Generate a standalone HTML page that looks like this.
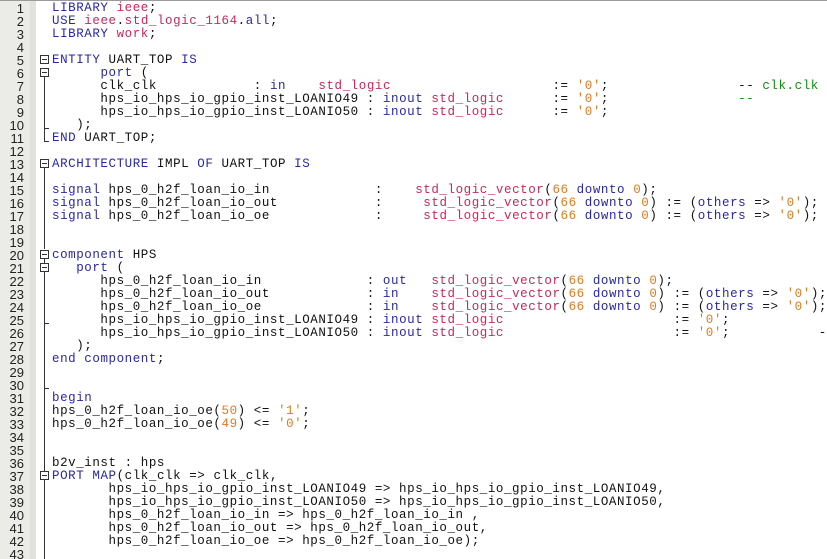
<!DOCTYPE html>
<html><head><meta charset="utf-8"><style>
html,body{margin:0;padding:0;background:#fff;width:827px;height:559px;overflow:hidden;position:relative}
.top{position:absolute;left:0;top:0;width:827px;height:1px;background:#9a9a9a}
.gut{position:absolute;left:0;top:1px;width:36px;height:558px;background:#ebebe8}
.gut2{position:absolute;left:30px;top:1px;width:6px;height:558px;background:#e2e2dc}
.nums{position:absolute;left:0;top:2px;width:24px;text-align:right;font-family:"Liberation Sans",sans-serif;font-size:13px;line-height:13px;color:#222;white-space:pre}
.code{position:absolute;left:52px;top:2px;font-family:"Liberation Mono",monospace;font-size:12.5px;letter-spacing:0.57px;line-height:13px;color:#111;white-space:pre}
.k{color:#2828a8}.t{color:#c8285a}.n{color:#e07a20}.c{color:#109010}
.box{position:absolute;left:40px;width:7px;height:7px;border:1px solid #333;background:#fff}
.box:after{content:"";position:absolute;left:1px;top:3px;width:5px;height:1px;background:#333}
.vl{position:absolute;left:44px;width:1px;background:#333}
.tk{position:absolute;left:44px;width:5px;height:1px;background:#333}
</style></head><body>
<div class="top"></div><div class="gut"></div><div class="gut2"></div>
<div class="nums">1
2
3
4
5
6
7
8
9
10
11
12
13
14
15
16
17
18
19
20
21
22
23
24
25
26
27
28
29
30
31
32
33
34
35
36
37
38
39
40
41
42
43</div>
<div class="box" style="top:55px"></div>
<div class="box" style="top:68px"></div>
<div class="vl" style="top:77px;height:58px"></div>
<div class="tk" style="top:128px"></div>
<div class="tk" style="top:141px"></div>
<div class="vl" style="top:128px;height:14px"></div>
<div class="box" style="top:159px"></div>
<div class="vl" style="top:168px;height:81px"></div>
<div class="box" style="top:250px"></div>
<div class="box" style="top:263px"></div>
<div class="vl" style="top:259px;height:4px"></div>
<div class="vl" style="top:272px;height:204px"></div>
<div class="tk" style="top:323px"></div>
<div class="tk" style="top:388px"></div>
<div class="box" style="top:471px"></div>
<div class="vl" style="top:480px;height:79px"></div>
<div class="code"><span class="k">LIBRARY</span> <span class="t">ieee</span>;
<span class="k">USE</span> <span class="t">ieee</span>.<span class="t">std_logic_1164</span>.<span class="k">all</span>;
<span class="k">LIBRARY</span> <span class="t">work</span>;

<span class="k">ENTITY</span> UART_TOP <span class="k">IS</span>
      <span class="k">port</span> (
      clk_clk            : <span class="k">in</span>    <span class="t">std_logic</span>                    := <span class="n">'0'</span>;                -- <span class="c">clk.clk</span>
      hps_io_hps_io_gpio_inst_LOANIO49 : <span class="k">inout</span> <span class="t">std_logic</span>      := <span class="n">'0'</span>;                <span class="c">--</span>
      hps_io_hps_io_gpio_inst_LOANIO50 : <span class="k">inout</span> <span class="t">std_logic</span>      := <span class="n">'0'</span>;
   );
<span class="k">END</span> UART_TOP;

<span class="k">ARCHITECTURE</span> IMPL <span class="k">OF</span> UART_TOP <span class="k">IS</span>

<span class="k">signal</span> hps_0_h2f_loan_io_in             :    <span class="t">std_logic_vector</span>(<span class="n">66</span> <span class="k">downto</span> <span class="n">0</span>);
<span class="k">signal</span> hps_0_h2f_loan_io_out            :     <span class="t">std_logic_vector</span>(<span class="n">66</span> <span class="k">downto</span> <span class="n">0</span>) := (<span class="k">others</span> => <span class="n">'0'</span>);
<span class="k">signal</span> hps_0_h2f_loan_io_oe             :     <span class="t">std_logic_vector</span>(<span class="n">66</span> <span class="k">downto</span> <span class="n">0</span>) := (<span class="k">others</span> => <span class="n">'0'</span>);


<span class="k">component</span> HPS
   <span class="k">port</span> (
      hps_0_h2f_loan_io_in             : <span class="k">out</span>   <span class="t">std_logic_vector</span>(<span class="n">66</span> <span class="k">downto</span> <span class="n">0</span>);
      hps_0_h2f_loan_io_out            : <span class="k">in</span>    <span class="t">std_logic_vector</span>(<span class="n">66</span> <span class="k">downto</span> <span class="n">0</span>) := (<span class="k">others</span> => <span class="n">'0'</span>);
      hps_0_h2f_loan_io_oe             : <span class="k">in</span>    <span class="t">std_logic_vector</span>(<span class="n">66</span> <span class="k">downto</span> <span class="n">0</span>) := (<span class="k">others</span> => <span class="n">'0'</span>);
      hps_io_hps_io_gpio_inst_LOANIO49 : <span class="k">inout</span> <span class="t">std_logic</span>                     := <span class="n">'0'</span>;
      hps_io_hps_io_gpio_inst_LOANIO50 : <span class="k">inout</span> <span class="t">std_logic</span>                     := <span class="n">'0'</span>;           -
   );
<span class="k">end</span> <span class="k">component</span>;


<span class="k">begin</span>
hps_0_h2f_loan_io_oe(<span class="n">50</span>) <= <span class="n">'1'</span>;
hps_0_h2f_loan_io_oe(<span class="n">49</span>) <= <span class="n">'0'</span>;


b2v_inst : hps
<span class="k">PORT</span> <span class="k">MAP</span>(clk_clk => clk_clk,
       hps_io_hps_io_gpio_inst_LOANIO49 => hps_io_hps_io_gpio_inst_LOANIO49,
       hps_io_hps_io_gpio_inst_LOANIO50 => hps_io_hps_io_gpio_inst_LOANIO50,
       hps_0_h2f_loan_io_in => hps_0_h2f_loan_io_in ,
       hps_0_h2f_loan_io_out => hps_0_h2f_loan_io_out,
       hps_0_h2f_loan_io_oe => hps_0_h2f_loan_io_oe);
</div>
</body></html>
